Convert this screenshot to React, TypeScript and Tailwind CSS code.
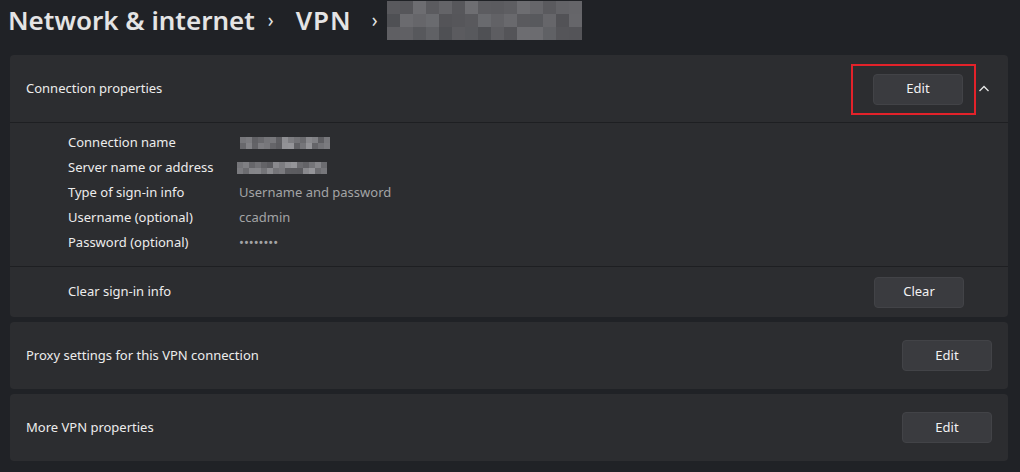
import { ReactNode } from "react";

type MosaicProps = {
  cols: number;
  rows: number;
  cell: number;
  seed: number;
  lo: number;
  hi: number;
};

// pixelated "redacted" block, shades picked from a tiny PRNG so it stays stable
function Mosaic({ cols, rows, cell, seed, lo, hi }: MosaicProps) {
  let s = seed;
  const next = () => {
    s = (s * 9301 + 49297) % 233280;
    return s / 233280;
  };
  const cells: number[] = [];
  for (let i = 0; i < cols * rows; i++) cells.push(Math.round(lo + (hi - lo) * next()));
  return (
    <div
      className="grid shrink-0"
      style={{ gridTemplateColumns: `repeat(${cols}, ${cell}px)`, gridAutoRows: `${cell}px` }}
    >
      {cells.map((v, i) => (
        <div key={i} style={{ backgroundColor: `rgb(${v},${v},${v + 4})` }} />
      ))}
    </div>
  );
}

function Button({ children }: { children: ReactNode }) {
  return (
    <button className="flex h-[31px] w-[90px] items-center justify-center rounded-[4px] border border-[#424347] bg-[#3a3b3f] text-[13px] text-[#f2f2f2]">
      {children}
    </button>
  );
}

function Chevron() {
  return (
    <svg width="12" height="12" viewBox="0 0 12 12" className="shrink-0">
      <polyline points="1.5,8 6,3.5 10.5,8" fill="none" stroke="#e6e6e6" strokeWidth="1.3" />
    </svg>
  );
}

const details = [
  { label: "Connection name", value: null, seed: 7, x: 1 },
  { label: "Server name or address", value: null, seed: 31, x: -2 },
  { label: "Type of sign-in info", value: "Username and password" },
  { label: "Username (optional)", value: "ccadmin" },
  { label: "Password (optional)", value: "••••••••" },
];

export default function App() {
  return (
    <div
      className="h-[472px] w-[1020px] overflow-hidden bg-[#202226] text-[13px] text-[#ececec]"
      style={{ fontFamily: '"Noto Sans", "Open Sans", sans-serif' }}
    >
      <div className="flex h-[40px] items-center pl-[8px] text-[26px] font-semibold leading-[40px] text-[#e4e4e4]">
        <span>Network &amp; internet</span>
        <span className="ml-[13px] mr-[22px] text-[19px] font-normal">›</span>
        <span className="tracking-[1px]">VPN</span>
        <span className="ml-[20px] mr-[9px] text-[19px] font-normal">›</span>
        <div className="opacity-90">
          <Mosaic cols={15} rows={3} cell={13} seed={3} lo={84} hi={120} />
        </div>
      </div>

      <div className="mt-[15px] flex flex-col gap-[5px] pl-[10px] pr-[12px]">
        <div className="overflow-hidden rounded-[4px] bg-[#2c2d30]">
          <div className="flex h-[67px] items-center pl-[16px] pt-[1px]">
            <span className="flex-1">Connection properties</span>
            <div className="flex h-[51px] w-[125px] items-center border-2 border-[#e3222a] pl-[20px]">
              <Button>Edit</Button>
            </div>
            <div className="ml-[2px] mr-[18px] flex">
              <Chevron />
            </div>
          </div>
          <div className="flex flex-col border-y border-[#1e1f22] pb-[11px] pl-[58px] pt-[7px]">
            {details.map((d) => (
              <div key={d.label} className="flex h-[25px] items-center">
                <span className="w-[171px] shrink-0">{d.label}</span>
                {d.value ? (
                  <span className="text-[#a3a4a6]">{d.value}</span>
                ) : (
                  <div className={d.x === 1 ? "ml-[1px]" : "ml-[-2px]"}>
                    <Mosaic cols={15} rows={2} cell={6} seed={d.seed ?? 1} lo={90} hi={150} />
                  </div>
                )}
              </div>
            ))}
          </div>
          <div className="flex h-[50px] items-center pl-[58px] pr-[44px]">
            <span className="flex-1">Clear sign-in info</span>
            <Button>Clear</Button>
          </div>
        </div>

        <div className="flex h-[67px] items-center rounded-[4px] bg-[#2c2d30] pl-[16px] pr-[16px]">
          <span className="flex-1">Proxy settings for this VPN connection</span>
          <Button>Edit</Button>
        </div>

        <div className="flex h-[67px] items-center rounded-[4px] bg-[#2c2d30] pl-[16px] pr-[16px]">
          <span className="flex-1">More VPN properties</span>
          <Button>Edit</Button>
        </div>
      </div>
    </div>
  );
}
